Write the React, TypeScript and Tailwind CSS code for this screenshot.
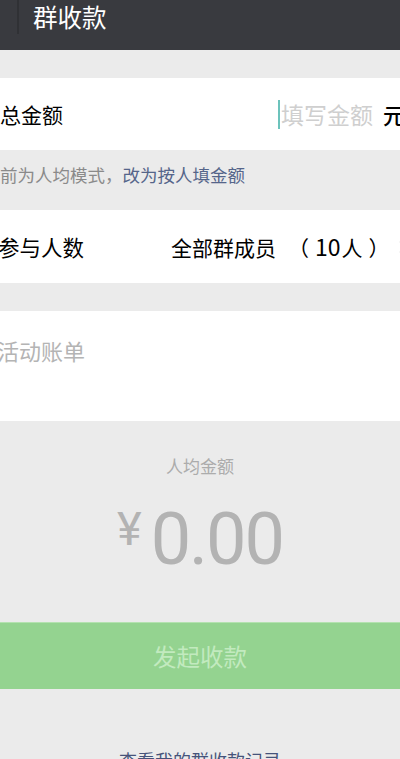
import { ChevronRight } from 'lucide-react';

const CJK = 'font-["Noto_Sans_CJK_SC","Noto_Sans",sans-serif]';

export default function App() {
  return (
    <div className={`w-[400px] h-[759px] overflow-hidden bg-[#ebebeb] ${CJK}`}>
      {/* Title bar */}
      <div className="h-[50px] bg-[#393a3f] flex items-start">
        <div className="ml-[17px] w-[2px] h-[34px] bg-[#303135]" />
        <div className="ml-[14px] pt-[4px] text-[24.5px] leading-[26px] text-white">群收款</div>
      </div>

      {/* Total amount */}
      <div className="mt-[28px] h-[72px] bg-white flex items-center">
        <span className="text-[21px] leading-[28px] text-black">总金额</span>
        <div className="ml-auto -mr-[5px] flex items-center">
          <span className="w-[2px] h-[29px] bg-[#6cc3bc]" />
          <span className="ml-[1px] text-[23px] leading-[30px] text-[#cfcfcf]">填写金额</span>
          <span className="ml-[10px] text-[22px] leading-[30px] font-medium text-black">元</span>
        </div>
      </div>

      {/* Mode hint */}
      <div className="h-[60px] pt-[13px] text-[17.5px] leading-[24px] whitespace-nowrap">
        <span className="-ml-[17.5px] text-[#8a8a8a]">目前为人均模式，</span>
        <span className="text-[#55658a]">改为按人填金额</span>
      </div>

      {/* Participants */}
      <div className="h-[73px] bg-white flex items-center whitespace-nowrap">
        <span className="-ml-[2px] w-[173px] shrink-0 text-[21.5px] leading-[28px] text-black">参与人数</span>
        <span className="text-[21px] leading-[28px] text-black [text-spacing-trim:space-all]">
          全部群成员<span className="ml-[12px]">（</span>
          <span className="ml-[6px] text-[23px]">10</span>
          <span className="ml-[1px]">人</span>
          <span className="ml-[6px]">）</span>
        </span>
        <ChevronRight className="ml-auto -mr-[13px] w-[20px] h-[20px] text-[#c4c4c4]" strokeWidth={2} />
      </div>

      {/* Description */}
      <div className="mt-[28px] h-[110px] bg-white pt-[24px]">
        <div className="-ml-[3px] text-[22px] leading-[30px] text-[#b4b4b4]">活动账单</div>
      </div>

      {/* Per-person amount */}
      <div className="h-[201px] flex flex-col items-center">
        <div className="mt-[33px] text-[17px] leading-[24px] text-[#acacac]">人均金额</div>
        <div className="mt-[26px] flex items-start text-[#b3b3b3] font-['Roboto',sans-serif] font-normal">
          <span className="mt-[2px] text-[47px] leading-[46px]">¥</span>
          <span className="ml-[9px] text-[72px] leading-[72px] tracking-[-2px]">0.00</span>
        </div>
      </div>

      {/* Submit */}
      <button className="w-full h-[67px] bg-[#94d390] border-t border-[#b4e2b0] flex items-center justify-center">
        <span className={`text-[23.5px] leading-[30px] text-[#c2eabf] ${CJK}`}>发起收款</span>
      </button>

      {/* Records link */}
      <div className="mt-[59px] text-center text-[18px] leading-[24px] text-[#46537a]">查看我的群收款记录</div>
    </div>
  );
}
